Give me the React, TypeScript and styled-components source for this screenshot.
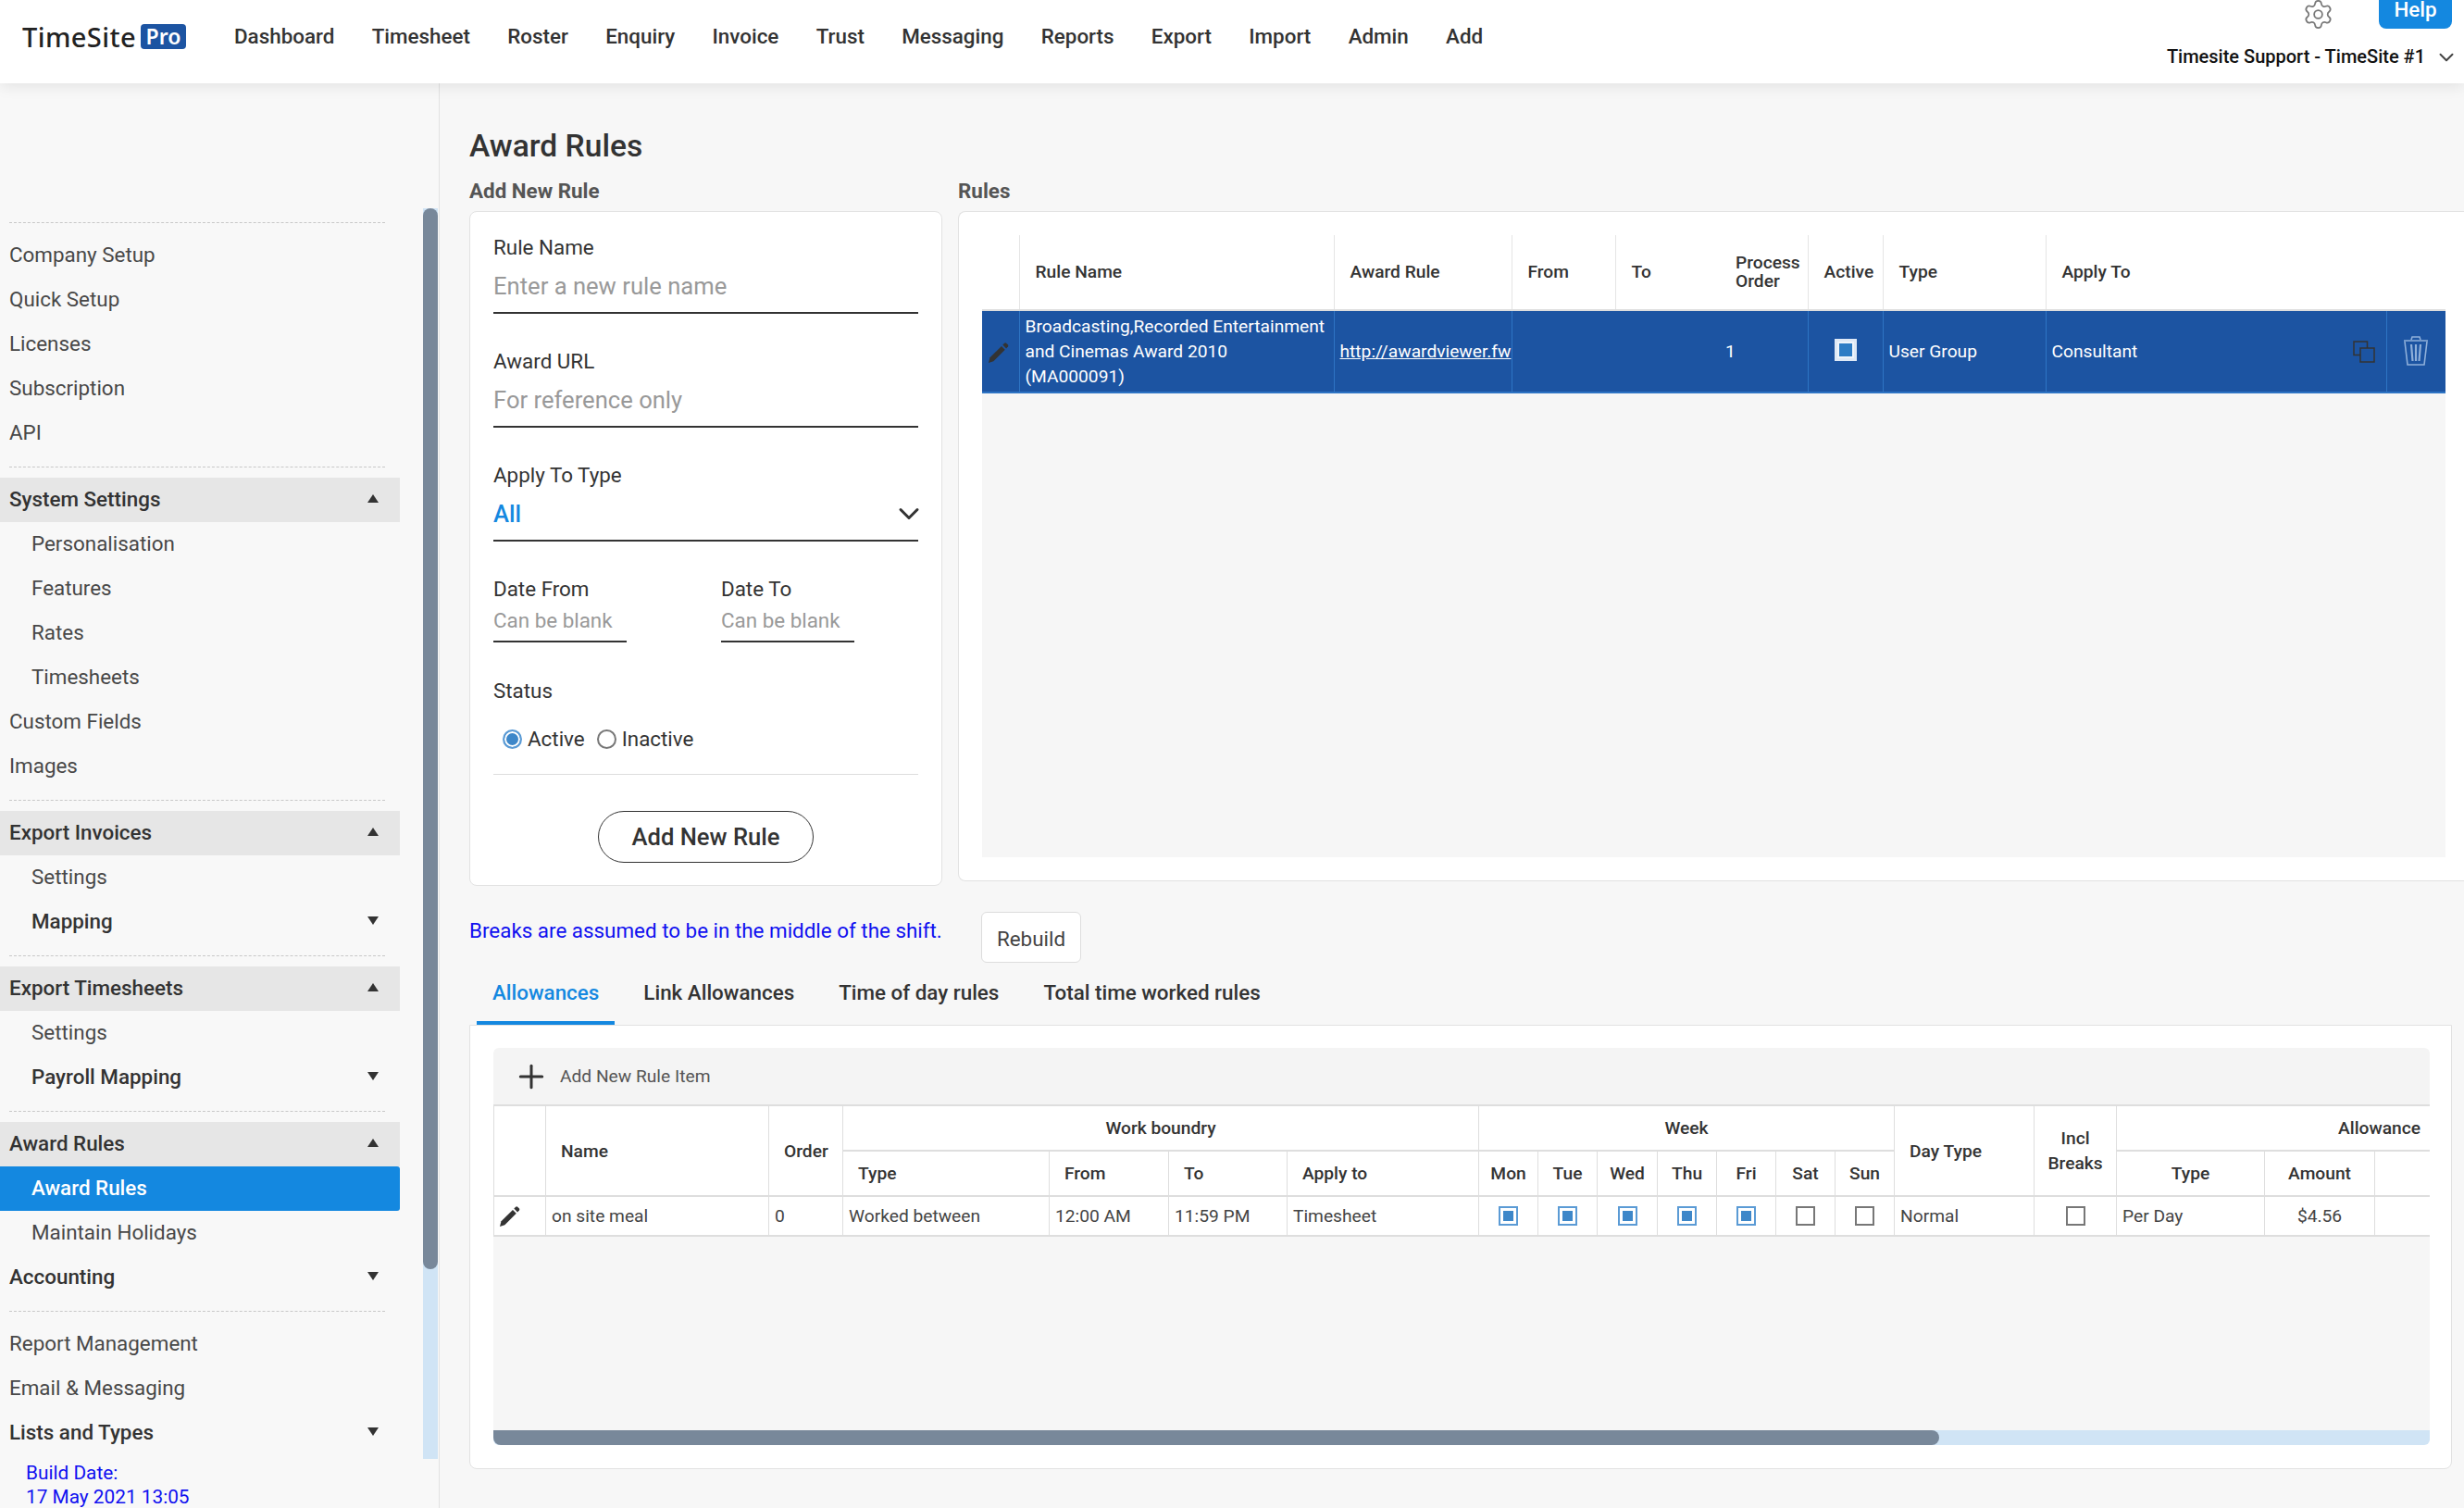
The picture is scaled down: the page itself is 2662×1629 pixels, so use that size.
import React from 'react';
import styled, { createGlobalStyle } from 'styled-components';
import { Settings, ChevronDown, Plus } from 'lucide-react';

const GlobalStyle = createGlobalStyle`
  html, body {
    margin: 0;
    padding: 0;
    height: 1629px;
    overflow: hidden;
    background: #f7f7f7;
    font-family: Roboto, "Liberation Sans", sans-serif;
    color: #333;
  }
  * { box-sizing: border-box; }
`;

type SideEntry =
  | { kind: 'divider' }
  | { kind: 'row'; label: string; level?: number; variant?: 'plain' | 'section' | 'group' | 'active'; arrow?: 'up' | 'down' };

const sideEntries: SideEntry[] = [
  { kind: 'divider' },
  { kind: 'row', label: 'Company Setup' },
  { kind: 'row', label: 'Quick Setup' },
  { kind: 'row', label: 'Licenses' },
  { kind: 'row', label: 'Subscription' },
  { kind: 'row', label: 'API' },
  { kind: 'divider' },
  { kind: 'row', label: 'System Settings', variant: 'section', arrow: 'up' },
  { kind: 'row', label: 'Personalisation', level: 1 },
  { kind: 'row', label: 'Features', level: 1 },
  { kind: 'row', label: 'Rates', level: 1 },
  { kind: 'row', label: 'Timesheets', level: 1 },
  { kind: 'row', label: 'Custom Fields' },
  { kind: 'row', label: 'Images' },
  { kind: 'divider' },
  { kind: 'row', label: 'Export Invoices', variant: 'section', arrow: 'up' },
  { kind: 'row', label: 'Settings', level: 1 },
  { kind: 'row', label: 'Mapping', level: 1, variant: 'group', arrow: 'down' },
  { kind: 'divider' },
  { kind: 'row', label: 'Export Timesheets', variant: 'section', arrow: 'up' },
  { kind: 'row', label: 'Settings', level: 1 },
  { kind: 'row', label: 'Payroll Mapping', level: 1, variant: 'group', arrow: 'down' },
  { kind: 'divider' },
  { kind: 'row', label: 'Award Rules', variant: 'section', arrow: 'up' },
  { kind: 'row', label: 'Award Rules', level: 1, variant: 'active' },
  { kind: 'row', label: 'Maintain Holidays', level: 1 },
  { kind: 'row', label: 'Accounting', variant: 'group', arrow: 'down' },
  { kind: 'divider' },
  { kind: 'row', label: 'Report Management' },
  { kind: 'row', label: 'Email & Messaging' },
  { kind: 'row', label: 'Lists and Types', variant: 'group', arrow: 'down' },
];

const navItems = ['Dashboard', 'Timesheet', 'Roster', 'Enquiry', 'Invoice', 'Trust', 'Messaging', 'Reports', 'Export', 'Import', 'Admin', 'Add'];
const ruleCols = [40, 340, 192, 112, 113, 95, 81, 176, 368, 64];
const itemCols = [56, 241, 80, 223, 129, 128, 207, 64, 64, 65, 64, 64, 64, 64, 151, 89, 160, 119, 289];
const days = [
  { name: 'Mon', on: true },
  { name: 'Tue', on: true },
  { name: 'Wed', on: true },
  { name: 'Thu', on: true },
  { name: 'Fri', on: true },
  { name: 'Sat', on: false },
  { name: 'Sun', on: false },
];

const PencilIcon = () => (
  <svg width="23" height="24" viewBox="0 0 24 24" fill="#333">
    <path d="M1 23.5 L2.6 17.6 L15.6 4.6 L19.6 8.6 L6.6 21.6 Z" />
    <path d="M17 3.2 L19 1.2 Q20 0.4 21 1.2 L23 3.2 Q23.6 4.2 23 5 L21 7.2 Z" />
  </svg>
);

const CopyIcon = () => (
  <svg width="24" height="24" viewBox="0 0 24 24" fill="none" stroke="#333" strokeWidth="1.5">
    <path d="M15.5 8 V1 H1 V15.5 H8" />
    <rect x="8" y="8" width="15" height="15" />
  </svg>
);

const TrashIcon = () => (
  <svg width="28" height="33" viewBox="0 0 28 33" fill="none" stroke="#8fb0da" strokeWidth="1.6">
    <path d="M9 4 L10 1 H18 L19 4" />
    <path d="M1 5 H27 M2 6 L5 31 H23 L26 6" />
    <path d="M9 9 L10.5 27 M14 9 V27 M19 9 L17.5 27" strokeWidth="2.2" />
  </svg>
);

const App: React.FC = () => {
  return (
    <Page>
      <GlobalStyle />
      <Header>
        <Logo>
          <LogoText>TimeSite</LogoText>
          <LogoBadge>Pro</LogoBadge>
        </Logo>
        <Nav>
          {navItems.map((item) => (
            <NavItem key={item}>{item}</NavItem>
          ))}
        </Nav>
        <HeaderRight>
          <HeaderTools>
            <GearIcon size={35} strokeWidth={1.2} />
            <HelpButton>Help</HelpButton>
          </HeaderTools>
          <UserRow>
            <span>Timesite Support - TimeSite #1</span>
            <UserChevron size={26} strokeWidth={1.8} />
          </UserRow>
        </HeaderRight>
      </Header>

      <Body>
        <Sidebar>
          <SideNav>
            {sideEntries.map((entry, i) =>
              entry.kind === 'divider' ? (
                <SideDivider key={i} />
              ) : (
                <SideRow key={i} $level={entry.level ?? 0} $variant={entry.variant ?? 'plain'}>
                  {entry.label}
                  {entry.arrow && <Arrow $dir={entry.arrow} />}
                </SideRow>
              )
            )}
            <BuildDate>
              Build Date:
              <br />
              17 May 2021 13:05
            </BuildDate>
          </SideNav>
          <SideScroll>
            <SideThumb />
          </SideScroll>
        </Sidebar>

        <Main>
          <PageTitle>Award Rules</PageTitle>
          <TopColumns>
            <AddColumn>
              <SectionTitle>Add New Rule</SectionTitle>
              <AddCard>
                <Field>
                  <FieldLabel>Rule Name</FieldLabel>
                  <LineValue>Enter a new rule name</LineValue>
                </Field>
                <Field>
                  <FieldLabel>Award URL</FieldLabel>
                  <LineValue>For reference only</LineValue>
                </Field>
                <Field>
                  <FieldLabel>Apply To Type</FieldLabel>
                  <LineValue $selected>
                    All
                    <SelectChevron size={36} strokeWidth={2} />
                  </LineValue>
                </Field>
                <DateRow>
                  <div>
                    <FieldLabel>Date From</FieldLabel>
                    <DateValue>Can be blank</DateValue>
                  </div>
                  <div>
                    <FieldLabel>Date To</FieldLabel>
                    <DateValue>Can be blank</DateValue>
                  </div>
                </DateRow>
                <FieldLabel>Status</FieldLabel>
                <RadioRow>
                  <Radio $on />
                  <RadioText>Active</RadioText>
                  <Radio />
                  <RadioText>Inactive</RadioText>
                </RadioRow>
                <FormDivider />
                <AddButton>Add New Rule</AddButton>
              </AddCard>
            </AddColumn>

            <RulesColumn>
              <SectionTitle>Rules</SectionTitle>
              <RulesCard>
                <RulesArea>
                  <RulesTable>
                    <colgroup>
                      {ruleCols.map((w, i) => (
                        <col key={i} width={w} />
                      ))}
                    </colgroup>
                    <thead>
                      <tr>
                        <RulesHead />
                        <RulesHead $line>Rule Name</RulesHead>
                        <RulesHead $line>Award Rule</RulesHead>
                        <RulesHead $line>From</RulesHead>
                        <RulesHead $line>To</RulesHead>
                        <RulesHead>
                          Process
                          <br />
                          Order
                        </RulesHead>
                        <RulesHead $line>Active</RulesHead>
                        <RulesHead $line>Type</RulesHead>
                        <RulesHead $line>Apply To</RulesHead>
                        <RulesHead />
                      </tr>
                    </thead>
                    <tbody>
                      <tr>
                        <RulesCell $first>
                          <PencilIcon />
                        </RulesCell>
                        <RulesCell>
                          Broadcasting,Recorded Entertainment
                          <br />
                          and Cinemas Award 2010
                          <br />
                          (MA000091)
                        </RulesCell>
                        <RulesCell>
                          <AwardLink>http://awardviewer.fw</AwardLink>
                        </RulesCell>
                        <RulesCell />
                        <RulesCell $open />
                        <RulesCell $open>1</RulesCell>
                        <RulesCell $center>
                          <ActiveBox />
                        </RulesCell>
                        <RulesCell>User Group</RulesCell>
                        <RulesCell>
                          <ApplyInner>
                            Consultant
                            <CopyIcon />
                          </ApplyInner>
                        </RulesCell>
                        <RulesCell $center>
                          <TrashIcon />
                        </RulesCell>
                      </tr>
                    </tbody>
                  </RulesTable>
                </RulesArea>
              </RulesCard>
            </RulesColumn>
          </TopColumns>

          <NoticeRow>
            <Notice>Breaks are assumed to be in the middle of the shift.</Notice>
            <RebuildButton>Rebuild</RebuildButton>
          </NoticeRow>

          <Tabs>
            <Tab $active>Allowances</Tab>
            <Tab>Link Allowances</Tab>
            <Tab>Time of day rules</Tab>
            <Tab>Total time worked rules</Tab>
          </Tabs>

          <TabCard>
            <Toolbar>
              <Plus size={40} color="#333" strokeWidth={1.8} />
              <ToolbarText>Add New Rule Item</ToolbarText>
            </Toolbar>
            <TableClip>
              <ItemsTable>
                <colgroup>
                  {itemCols.map((w, i) => (
                    <col key={i} width={w} />
                  ))}
                </colgroup>
                <thead>
                  <HeadRow>
                    <ItemHead rowSpan={2} />
                    <ItemHead rowSpan={2}>Name</ItemHead>
                    <ItemHead rowSpan={2}>Order</ItemHead>
                    <ItemHead colSpan={4} $center>Work boundry</ItemHead>
                    <ItemHead colSpan={7} $center>Week</ItemHead>
                    <ItemHead rowSpan={2}>Day Type</ItemHead>
                    <ItemHead rowSpan={2} $center $tight>
                      Incl
                      <br />
                      Breaks
                    </ItemHead>
                    <ItemHead colSpan={3} $center>Allowance</ItemHead>
                  </HeadRow>
                  <HeadRow>
                    <ItemHead>Type</ItemHead>
                    <ItemHead>From</ItemHead>
                    <ItemHead>To</ItemHead>
                    <ItemHead>Apply to</ItemHead>
                    {days.map((d) => (
                      <ItemHead key={d.name} $center $tight>{d.name}</ItemHead>
                    ))}
                    <ItemHead $center>Type</ItemHead>
                    <ItemHead $center>Amount</ItemHead>
                    <ItemHead />
                  </HeadRow>
                </thead>
                <tbody>
                  <BodyRow>
                    <PencilCell><PencilIcon /></PencilCell>
                    <ItemCell>on site meal</ItemCell>
                    <ItemCell>0</ItemCell>
                    <ItemCell>Worked between</ItemCell>
                    <ItemCell>12:00 AM</ItemCell>
                    <ItemCell>11:59 PM</ItemCell>
                    <ItemCell>Timesheet</ItemCell>
                    {days.map((d) => (
                      <ItemCell key={d.name} $center>
                        <CheckBox $on={d.on} />
                      </ItemCell>
                    ))}
                    <ItemCell>Normal</ItemCell>
                    <ItemCell $center>
                      <CheckBox />
                    </ItemCell>
                    <ItemCell>Per Day</ItemCell>
                    <ItemCell $center>$4.56</ItemCell>
                    <ItemCell />
                  </BodyRow>
                </tbody>
              </ItemsTable>
            </TableClip>
            <GreyFill />
            <HScroll>
              <HThumb />
            </HScroll>
          </TabCard>
        </Main>
      </Body>
    </Page>
  );
};

export default App;

const Page = styled.div`
  width: 2662px;
  height: 1629px;
  overflow: hidden;
  display: flex;
  flex-direction: column;
`;

const Header = styled.header`
  position: relative;
  z-index: 2;
  flex: 0 0 90px;
  display: flex;
  background: #fff;
  padding: 0 13px 0 24px;
  box-shadow: 0 2px 16px rgba(0, 0, 0, 0.1);
`;

const Logo = styled.div`
  display: flex;
  align-items: center;
  height: 78px;
  width: 177px;
  flex: 0 0 177px;
`;

const LogoText = styled.span`
  font-family: "Noto Sans", sans-serif;
  font-size: 29px;
  font-weight: 500;
  letter-spacing: 0.4px;
  color: #222;
`;

const LogoBadge = styled.span`
  margin-left: 5px;
  height: 27px;
  width: 49px;
  border-radius: 4px;
  background: #1c54a2;
  color: #fff;
  font-family: "Noto Sans", sans-serif;
  font-size: 23px;
  font-weight: 600;
  line-height: 26px;
  text-align: center;
`;

const Nav = styled.nav`
  display: flex;
  gap: 40.3px;
  margin-left: 52px;
  height: 78px;
  align-items: center;
`;

const NavItem = styled.span`
  font-size: 22.4px;
  font-weight: 500;
  color: #333;
`;

const HeaderRight = styled.div`
  margin-left: auto;
  display: flex;
  flex-direction: column;
  align-items: flex-end;
  margin-top: -9px;
`;

const HeaderTools = styled.div`
  display: flex;
  gap: 48px;
`;

const GearIcon = styled(Settings)`
  color: #777;
  margin-top: 7px;
`;

const HelpButton = styled.div`
  width: 79px;
  height: 40px;
  border-radius: 8px;
  background: #1488e0;
  color: #fff;
  font-size: 22.4px;
  font-weight: 500;
  line-height: 38px;
  text-align: center;
`;

const UserRow = styled.div`
  margin-top: 13px;
  display: flex;
  align-items: center;
  gap: 10px;
  font-size: 20px;
  font-weight: 500;
  line-height: 28px;
  color: #111;
`;

const UserChevron = styled(ChevronDown)`
  color: #444;
  margin-right: -7px;
  margin-top: 3px;
`;

const Body = styled.div`
  flex: 1;
  display: flex;
  min-height: 0;
`;

const Sidebar = styled.aside`
  flex: 0 0 475px;
  display: flex;
  background: #f8f8f8;
  border-right: 1px solid #e2e2e2;
`;

const SideNav = styled.div`
  width: 432px;
  padding-top: 138px;
`;

const SideDivider = styled.div`
  width: 406px;
  margin: 12px 0 11px 10px;
  border-top: 1px dashed #c8c8c8;
`;

const SideRow = styled.div<{ $level: number; $variant: string }>`
  position: relative;
  height: 48px;
  line-height: 46px;
  padding-left: ${(p) => (p.$level ? 34 : 10)}px;
  font-size: 22.4px;
  font-weight: ${(p) => (p.$variant === 'plain' ? 400 : 500)};
  color: ${(p) => (p.$variant === 'active' ? '#fff' : p.$variant === 'plain' ? '#484848' : '#333')};
  background: ${(p) => (p.$variant === 'section' ? '#e6e6e6' : p.$variant === 'active' ? '#1488e0' : 'transparent')};
  border-radius: ${(p) => (p.$variant === 'active' ? '0 3px 3px 0' : '0')};
`;

const Arrow = styled.i<{ $dir: 'up' | 'down' }>`
  position: absolute;
  right: 23px;
  top: 18px;
  width: 0;
  height: 0;
  border-left: 6px solid transparent;
  border-right: 6px solid transparent;
  ${(p) => (p.$dir === 'up' ? 'border-bottom: 9px solid #333;' : 'border-top: 9px solid #333;')}
`;

const BuildDate = styled.div`
  margin: 6px 0 0 28px;
  font-size: 20.8px;
  line-height: 26px;
  color: #1010f0;
`;

const SideScroll = styled.div`
  width: 16px;
  height: 1351px;
  margin: 135px 0 0 25px;
  background: #d0e4f5;
`;

const SideThumb = styled.div`
  height: 1146px;
  background: #78889a;
  border-radius: 8px;
`;

const Main = styled.main`
  flex: 1;
  min-width: 0;
  background: #f7f7f7;
  padding: 48px 0 0 32px;
`;

const PageTitle = styled.h1`
  margin: 0 0 14px;
  font-size: 33.6px;
  font-weight: 500;
  line-height: 40px;
  color: #333;
`;

const TopColumns = styled.div`
  display: flex;
  gap: 17px;
  align-items: flex-start;
`;

const AddColumn = styled.section`
  flex: 0 0 511px;
`;

const RulesColumn = styled.section`
  flex: 1;
`;

const SectionTitle = styled.h2`
  margin: 0 0 8px;
  font-size: 22.4px;
  font-weight: 700;
  line-height: 28px;
  color: #555;
`;

const AddCard = styled.div`
  height: 729px;
  padding: 26px 25px 0 25px;
  background: #fff;
  border: 1px solid #e2e2e2;
  border-radius: 8px;
`;

const Field = styled.div`
  margin-bottom: 39px;
`;

const FieldLabel = styled.div`
  font-size: 22.4px;
  line-height: 24px;
  color: #333;
`;

const LineValue = styled.div<{ $selected?: boolean }>`
  display: flex;
  align-items: center;
  justify-content: space-between;
  height: 60px;
  padding: 12px 0 10px;
  border-bottom: 2px solid #333;
  font-size: 25.6px;
  line-height: 36px;
  font-weight: ${(p) => (p.$selected ? 500 : 400)};
  color: ${(p) => (p.$selected ? '#1488e0' : '#999')};
`;

const SelectChevron = styled(ChevronDown)`
  color: #333;
  margin-right: -8px;
`;

const DateRow = styled.div`
  display: grid;
  grid-template-columns: 144px 144px;
  column-gap: 102px;
  margin-bottom: 40px;
`;

const DateValue = styled.div`
  height: 46px;
  padding-top: 7px;
  border-bottom: 2px solid #333;
  font-size: 22.4px;
  line-height: 30px;
  color: #999;
`;

const RadioRow = styled.div`
  display: flex;
  align-items: center;
  height: 30px;
  margin-top: 25px;
  padding-left: 10px;
`;

const Radio = styled.span<{ $on?: boolean }>`
  width: 21px;
  height: 21px;
  border-radius: 50%;
  border: 2px solid ${(p) => (p.$on ? '#5b9bd5' : '#777')};
  background: ${(p) => (p.$on ? '#3d87c9' : '#fff')};
  box-shadow: inset 0 0 0 2px #fff;
`;

const RadioText = styled.span`
  margin: 0 13px 0 6px;
  font-size: 22.4px;
  color: #333;
`;

const FormDivider = styled.div`
  margin-top: 23px;
  border-top: 1px solid #ddd;
`;

const AddButton = styled.button`
  display: block;
  width: 233px;
  height: 56px;
  margin: 39px auto 0;
  border: 1.5px solid #333;
  border-radius: 28px;
  background: #fff;
  font-family: Roboto, sans-serif;
  font-size: 25.6px;
  font-weight: 500;
  color: #333;
`;

const RulesCard = styled.div`
  height: 724px;
  padding: 25px 20px 25px 25px;
  background: #fff;
  border: 1px solid #e2e2e2;
  border-right: 0;
  border-radius: 8px 0 0 8px;
`;

const RulesArea = styled.div`
  height: 100%;
  background: #f6f6f6;
`;

const RulesTable = styled.table`
  width: 1581px;
  table-layout: fixed;
  border-collapse: collapse;
`;

const RulesHead = styled.th<{ $line?: boolean }>`
  height: 81px;
  padding: 0 0 0 17px;
  background: #fff;
  border-bottom: 2px solid #ddd;
  border-left: ${(p) => (p.$line ? '1px solid #e5e5e5' : '0')};
  font-size: 19.2px;
  font-weight: 500;
  line-height: 20px;
  text-align: left;
  color: #333;
`;

const RulesCell = styled.td<{ $first?: boolean; $center?: boolean; $open?: boolean }>`
  height: 89px;
  padding: 0 ${(p) => (p.$center ? 0 : '5px')} 0 ${(p) => (p.$center ? 0 : '6px')};
  background: #1c54a2;
  border-bottom: 2px solid #2e74c4;
  border-left: ${(p) => (p.$first || p.$open ? '0' : '1px solid #2e74c4')};
  font-size: 19.2px;
  line-height: 27px;
  color: #fff;
  white-space: nowrap;
  overflow: hidden;
  text-align: ${(p) => (p.$center ? 'center' : 'left')};
  vertical-align: middle;
  svg { display: inline-block; vertical-align: middle; }
`;

const AwardLink = styled.a`
  color: #fff;
  text-decoration: underline;
`;

const ApplyInner = styled.div`
  display: flex;
  align-items: center;
  justify-content: space-between;
  padding-right: 7px;
`;

const ActiveBox = styled.span`
  display: block;
  width: 24px;
  height: 24px;
  margin: -3px auto 0;
  border: 3px solid #dfe9f6;
  background: #2d7cc5;
  box-shadow: inset 0 0 0 2px #eef4fb, inset 0 0 0 12px #2d7cc5;
`;

const CheckBox = styled.span<{ $on?: boolean }>`
  display: block;
  width: 21px;
  height: 21px;
  margin: 0 auto;
  border: 2px solid ${(p) => (p.$on ? '#5b9bd5' : '#777')};
  background: #fff;
  box-shadow: ${(p) => (p.$on ? 'inset 0 0 0 3px #fff, inset 0 0 0 12px #3d87c9' : 'none')};
`;

const NoticeRow = styled.div`
  display: flex;
  align-items: flex-start;
  margin-top: 28px;
`;

const Notice = styled.div`
  width: 553px;
  padding-top: 4px;
  font-size: 22.4px;
  line-height: 32px;
  color: #1010f0;
  white-space: nowrap;
`;

const RebuildButton = styled.button`
  width: 108px;
  height: 55px;
  padding-top: 3px;
  background: #fff;
  border: 1px solid #ddd;
  border-radius: 6px;
  font-family: Roboto, sans-serif;
  font-size: 22.4px;
  color: #444;
`;

const Tabs = styled.div`
  display: flex;
  gap: 14px;
  margin-left: 8px;
`;

const Tab = styled.div<{ $active?: boolean }>`
  padding: 7px 17px 6px;
  border-bottom: 4px solid ${(p) => (p.$active ? '#1488e0' : 'transparent')};
  font-size: 22.4px;
  font-weight: 500;
  line-height: 50px;
  color: ${(p) => (p.$active ? '#1488e0' : '#333')};
`;

const TabCard = styled.div`
  width: 2142px;
  height: 480px;
  display: flex;
  flex-direction: column;
  padding: 24px 23px 25px 25px;
  background: #fff;
  border: 1px solid #e2e2e2;
  border-radius: 0 0 8px 8px;
`;

const Toolbar = styled.div`
  flex: 0 0 61px;
  display: flex;
  align-items: center;
  gap: 11px;
  padding-left: 21px;
  background: #f4f4f4;
  border-radius: 6px 6px 0 0;
`;

const ToolbarText = styled.span`
  font-size: 19.2px;
  color: #555;
`;

const TableClip = styled.div`
  overflow: hidden;
`;

const ItemsTable = styled.table`
  width: 2321px;
  table-layout: fixed;
  border-collapse: collapse;
  background: #fff;
`;

const HeadRow = styled.tr`
  height: 49px;
`;

const BodyRow = styled.tr`
  height: 43px;
`;

const ItemHead = styled.th<{ $center?: boolean; $tight?: boolean }>`
  padding: 0 ${(p) => (p.$tight ? 0 : '16px')};
  border: 2px solid #dedede;
  border-left-width: 1px;
  border-right-width: 1px;
  font-size: 19.2px;
  font-weight: 500;
  line-height: 27px;
  text-align: ${(p) => (p.$center ? 'center' : 'left')};
  color: #333;
  white-space: nowrap;
`;

const ItemCell = styled.td<{ $center?: boolean }>`
  padding: 0 ${(p) => (p.$center ? 0 : '6px')};
  border: 2px solid #dedede;
  border-left-width: 1px;
  border-right-width: 1px;
  font-size: 19.2px;
  color: #444;
  text-align: ${(p) => (p.$center ? 'center' : 'left')};
  white-space: nowrap;
`;

const PencilCell = styled.td`
  padding: 0 0 0 5px;
  border: 2px solid #dedede;
  border-left-width: 1px;
  border-right-width: 1px;
  svg { display: block; }
`;

const GreyFill = styled.div`
  flex: 1;
  background: #f6f6f6;
`;

const HScroll = styled.div`
  flex: 0 0 16px;
  background: #d0e4f5;
  border-radius: 0 0 6px 6px;
`;

const HThumb = styled.div`
  width: 1562px;
  height: 16px;
  background: #78889a;
  border-radius: 0 8px 8px 8px;
`;
